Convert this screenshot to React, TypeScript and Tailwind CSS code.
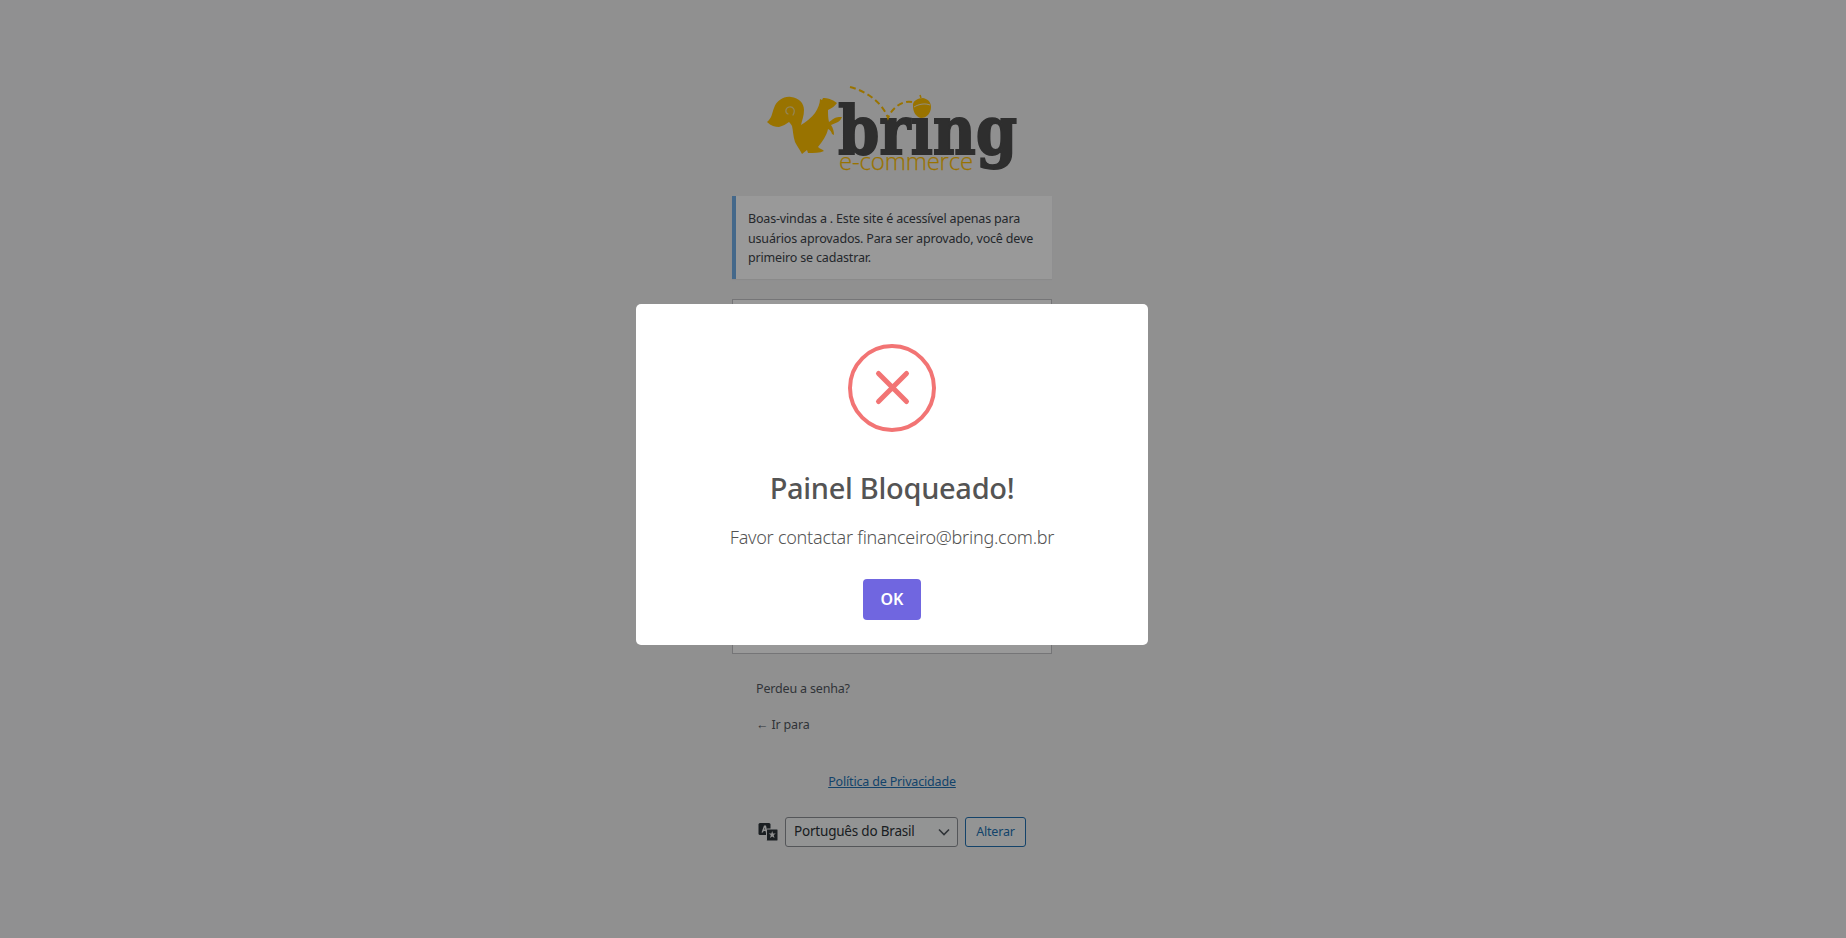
const BringLogo = () => (
  <svg width="270" height="100" viewBox="0 0 270 100" className="block overflow-visible">
    <text x="78" y="74" fontFamily="'DejaVu Serif', serif" fontWeight="700" fontSize="68" textLength="179" lengthAdjust="spacingAndGlyphs" fill="#4d4d4d" stroke="#4d4d4d" strokeWidth="1.8">bring</text>
    <text x="79" y="90" fontFamily="'Open Sans', sans-serif" fontWeight="300" fontSize="24" textLength="134" lengthAdjust="spacingAndGlyphs" fill="#ffc000" stroke="#ffc000" strokeWidth="0.25">e-commerce</text>
    {/* squirrel */}
    <path
      d="M7 42 C12 38 12 33 14 28 C17 20 24 16 31 17 C39 18 44 23 44 30 C44 36 42 40 41 45 C46 42 52 37 55 33 C58 28 60 24 60 19 L62 20 L63 18 C67 18 72 19 77 23 C75 26 72 28 68 30 C68 34 68 38 69 42 C72 40 75 37 79 37 L82 37 C81 39 80 41 78 42 L71 45 C73 48 74 51 74 55 L72 54 C71 51 70 50 68 49 C67 55 62 62 58 67 C60 69 62 69 64 71 C60 73 54 73 48 73 L47 70 L42 74 C40 70 37 66 35 62 C33 56 33 50 32 46 C31 44 30 43 29 42 C26 44 23 46 19 47 C15 47 11 46 7 42 Z"
      fill="#ffc000"
    />
    <path d="M33 35 C36 30 33 26 29 27 C25 28 25 33 28 34" fill="none" stroke="#f0f0f1" strokeOpacity="0.6" strokeWidth="1.2" strokeLinecap="round" />
    {/* hop path and acorn */}
    <path d="M90 7 C106 11 122 22 128 38 C132 28 142 20 152 22" fill="none" stroke="#ffc000" strokeWidth="2" strokeDasharray="6 3.5" />
    <path d="M153 26 C152 21 158 18 163 18 C168 19 171 22 171 27 C171 33 167 38 161 38 C156 37 153 32 153 26 Z" fill="#ffc000" />
    <path d="M154 27 C159 24 165 23 170 25" fill="none" stroke="#f0f0f1" strokeWidth="0.9" />
    <path d="M161 18 L160 15" fill="none" stroke="#ffc000" strokeWidth="1.5" />
  </svg>
)

const TranslationIcon = () => (
  <svg width="20" height="20" viewBox="0 0 20 20" className="shrink-0">
    <rect x="0.5" y="1" width="12" height="12" rx="1.5" fill="#2c3338" />
    <path d="M3.5 10.5 L6 3.5 H8 L9.5 10.5 H7.8 L7.5 9 H5.6 L5 10.5 Z M6.1 7.6 H7.2 L6.9 5.5 Z" fill="#f0f0f1" />
    <rect x="8.5" y="7" width="11.5" height="12" rx="1" fill="#2c3338" stroke="#f0f0f1" strokeWidth="1" />
    <path d="M14.2 9 L15 11.5 H17.8 L15.7 13 L16.5 16 L14.2 14.4 L12 16 L12.8 13 L10.7 11.5 H13.4 Z" fill="#f0f0f1" />
  </svg>
)

export default function App() {
  return (
    <div className="relative h-[938px] w-full overflow-hidden bg-[#f0f0f1] font-['Noto_Sans',sans-serif] text-[12.5px] leading-[19.5px] tracking-[-0.17px] text-[#3c434a]">
      {/* login page under the dialog */}
      <div className="flex w-[1784px] flex-col items-center pt-[80px]">
        <div className="w-[320px]">
          <div className="ml-[28px]">
            <BringLogo />
          </div>

          <div className="mt-4 border-l-4 border-[#72aee6] bg-white pt-[13px] pb-[11px] pl-3 pr-3 shadow-[0_1px_1px_rgba(0,0,0,0.04)]">
            Boas-vindas a . Este site é acessível apenas para usuários aprovados. Para ser aprovado, você deve primeiro se cadastrar.
          </div>

          <div className="mt-5 h-[355px] border border-[#c3c4c7] bg-white" />

          <p className="mt-[25px] px-6 text-[#50575e]">Perdeu a senha?</p>
          <p className="mt-[17px] px-6 text-[#50575e]">← Ir para</p>

          <p className="mt-[37px] text-center text-[#2271b1] underline">Política de Privacidade</p>

          <div className="mt-[26px] flex items-center pl-[26px]">
            <TranslationIcon />
            <div className="ml-[7px] flex h-[30px] w-[173px] items-center justify-between rounded-[3px] border border-[#8c8f94] bg-[#f6f7f7] pl-2 pr-[7px] text-[13.5px] tracking-[-0.2px] text-[#2c3338]">
              <span>Português do Brasil</span>
              <svg width="12" height="12" viewBox="0 0 12 12" fill="none" stroke="#50575e" strokeWidth="1.6">
                <path d="M1 3.5 L6 8.5 L11 3.5" />
              </svg>
            </div>
            <button className="ml-[7px] h-[30px] w-[61px] rounded-[3px] border border-[#2271b1] bg-[#f6f7f7] text-[12.5px] text-[#2271b1]">
              Alterar
            </button>
          </div>
        </div>
      </div>

      {/* dialog backdrop */}
      <div className="absolute inset-0 bg-black/40">
        <div className="flex h-full w-[1784px] items-start justify-center pt-[304px]">
          <div className="flex h-[341px] w-[512px] flex-col items-center rounded-[5px] bg-white pt-[40px] tracking-normal">
            <svg width="88" height="88" viewBox="0 0 88 88" fill="none" stroke="#f27474">
              <circle cx="44" cy="44" r="42" strokeWidth="4" />
              <path d="M30.5 29.5 L58.5 57.5 M58.5 29.5 L30.5 57.5" strokeWidth="5" strokeLinecap="round" />
            </svg>
            <h2 className="mt-[33px] text-[29px] leading-[45px] font-medium tracking-[-0.3px] text-[#545454]">Painel Bloqueado!</h2>
            <p className="mt-[14px] text-[18px] leading-[27px] font-light tracking-[-0.24px] text-[#545454]">Favor contactar financeiro@bring.com.br</p>
            <button className="mt-[28px] h-[41px] w-[58px] rounded-[4px] bg-[#7066e0] pt-px text-[16px] font-semibold text-white">
              OK
            </button>
          </div>
        </div>
      </div>
    </div>
  )
}
